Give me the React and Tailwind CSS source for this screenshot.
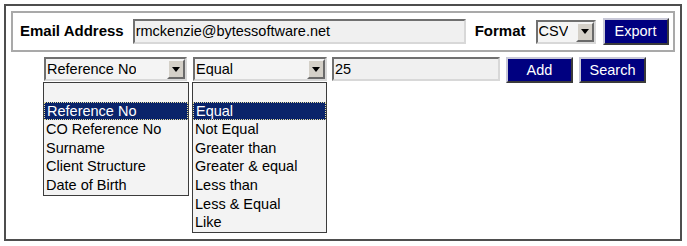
import React from "react";

const FONT = { fontFamily: '"Liberation Sans", Arial, sans-serif' };

const FIELDS = ["", "Reference No", "CO Reference No", "Surname", "Client Structure", "Date of Birth"];
const OPERATORS = ["", "Equal", "Not Equal", "Greater than", "Greater & equal", "Less than", "Less & Equal", "Like"];

const Arrow = () => (
  <span className="flex h-[20px] w-[18px] flex-shrink-0 items-center justify-center border-2 border-t-[#f4f4f4] border-l-[#f4f4f4] border-r-[#6a6a6a] border-b-[#6a6a6a] bg-[#d4d0c8]">
    <svg width="8" height="5" viewBox="0 0 8 5">
      <polygon points="0,0 8,0 4,5" fill="#000" />
    </svg>
  </span>
);

const SelectBox = ({ value, className }) => (
  <div
    className={`flex h-[24px] items-center justify-between border-2 border-t-[#707070] border-l-[#707070] border-r-[#d8d8d8] border-b-[#d8d8d8] bg-[#f4f4f4] pl-[1px] ${className}`}
  >
    <span className="truncate text-[14.5px] leading-none text-black">{value}</span>
    <Arrow />
  </div>
);

const NavyButton = ({ children, className }) => (
  <button
    type="button"
    className={`border-2 border-t-[#c8c8d8] border-l-[#c8c8d8] border-r-[#3a3a3a] border-b-[#3a3a3a] bg-[#000080] text-[14.5px] leading-none text-white ${className}`}
  >
    {children}
  </button>
);

const DropList = ({ items, selected, className }) => (
  <div className={`absolute left-[-1px] top-[25px] z-10 border border-[#3c3c3c] bg-[#f3f3f3] ${className}`}>
    {items.map((item, index) => (
      <div
        key={`${item}-${index}`}
        className={`flex h-[18.6px] items-center pl-[2px] text-[14.5px] leading-none ${
          item === selected
            ? "border border-dotted border-[#e8e0a0] bg-[#0a246a] pl-[1px] text-white"
            : "text-black"
        }`}
      >
        {item}
      </div>
    ))}
  </div>
);

export default function App() {
  return (
    <div className="h-[246px] w-[687px] bg-white pl-[4px] pt-[4px]" style={FONT}>
      <div className="h-[237px] w-[678px] border-2 border-[#4e4e4e] p-[5px]">
        <div className="flex h-[41px] w-[664px] items-center border-2 border-[#a9a9a9] pl-[7px]">
          <span className="text-[15px] font-bold text-black">Email Address</span>
          <div className="ml-[9px] flex h-[25px] w-[333px] items-center border-2 border-t-[#707070] border-l-[#707070] border-r-[#d8d8d8] border-b-[#d8d8d8] bg-[#f0f0f0] pl-[1px] text-[14.5px] leading-none text-black">
            rmckenzie@bytessoftware.net
          </div>
          <span className="ml-[9px] text-[15px] font-bold text-black">Format</span>
          <SelectBox value="CSV" className="ml-[10px] w-[60px]" />
          <NavyButton className="ml-[7px] h-[27px] w-[66px]">Export</NavyButton>
        </div>

        <div className="mt-[5px] flex items-start pl-[33px]">
          <div className="relative">
            <SelectBox value="Reference No" className="w-[143px]" />
            <DropList items={FIELDS} selected="Reference No" className="w-[146px]" />
          </div>
          <div className="relative ml-[6px]">
            <SelectBox value="Equal" className="w-[134px]" />
            <DropList items={OPERATORS} selected="Equal" className="w-[135px]" />
          </div>
          <div className="ml-[5px] flex h-[24px] w-[168px] items-center border-2 border-t-[#707070] border-l-[#707070] border-r-[#d8d8d8] border-b-[#d8d8d8] bg-[#f0f0f0] pl-[1px] text-[14.5px] leading-none text-black">
            25
          </div>
          <NavyButton className="ml-[6px] h-[26px] w-[67px]">Add</NavyButton>
          <NavyButton className="ml-[6px] h-[26px] w-[67px]">Search</NavyButton>
        </div>
      </div>
    </div>
  );
}
